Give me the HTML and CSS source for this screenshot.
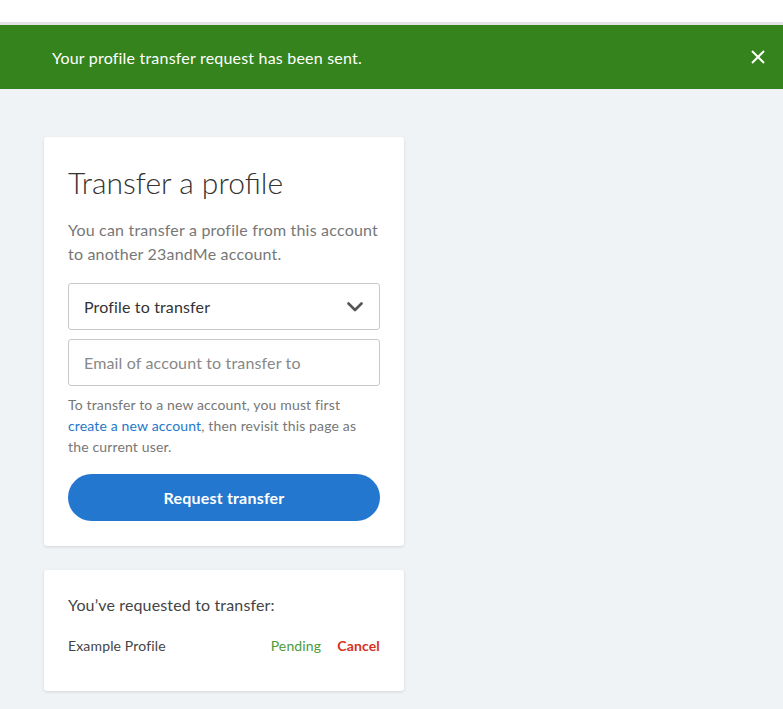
FILE: index.html
```html
<!DOCTYPE html>
<html>
<head>
<meta charset="utf-8">
<link rel="stylesheet" href="styles.css">
</head>
<body>
<div class="topbar"></div>
<div class="banner">
  <span class="banner-text">Your profile transfer request has been sent.</span>
  <button class="banner-close" aria-label="Close">
    <svg width="14" height="14" viewBox="0 0 14 14"><path d="M1 1L13 13M13 1L1 13" stroke="#fff" stroke-width="2" fill="none"/></svg>
  </button>
</div>
<main class="content">
  <section class="card form-card">
    <h1 class="title">Transfer a profile</h1>
    <p class="desc">You can transfer a profile from this account to another 23andMe account.</p>
    <div class="field select">
      <span class="select-text">Profile to transfer</span>
      <svg class="chevron" width="16" height="10" viewBox="0 0 16 10"><path d="M1.5 1.5L8 8L14.5 1.5" stroke="#555" stroke-width="2.6" fill="none" stroke-linecap="round" stroke-linejoin="round"/></svg>
    </div>
    <div class="field input">
      <span class="placeholder">Email of account to transfer to</span>
    </div>
    <p class="help">To transfer to a new account, you must first <a class="link" href="#">create a new account</a>, then revisit this page as the current user.</p>
    <button class="btn">Request transfer</button>
  </section>
  <section class="card list-card">
    <p class="list-title">You’ve requested to transfer:</p>
    <div class="row">
      <span class="row-name">Example Profile</span>
      <span class="row-actions">
        <span class="pending">Pending</span>
        <a class="cancel" href="#">Cancel</a>
      </span>
    </div>
  </section>
</main>
</body>
</html>
```
FILE: styles.css
```css
* { box-sizing: border-box; }
html, body { margin: 0; padding: 0; }
body {
  font-family: Lato, "Noto Sans", sans-serif;
  background: #eff3f6;
  min-height: 709px;
}
.topbar {
  height: 25px;
  background: #fff;
  border-bottom: 3px solid #e1e3e6;
}
.banner {
  height: 64px;
  background: #35831d;
  display: flex;
  align-items: center;
  justify-content: space-between;
  padding: 0 18px 0 52px;
}
.banner-text {
  color: #fff;
  font-size: 16px;
  letter-spacing: 0.2px;
}
.banner-close {
  background: none;
  border: 0;
  padding: 0;
  display: flex;
}
.content {
  padding: 48px 0 20px 44px;
  display: flex;
  flex-direction: column;
  gap: 24px;
}
.card {
  width: 360px;
  background: #fff;
  border-radius: 3px;
  box-shadow: 0 1px 3px rgba(0,0,0,0.12);
}
.form-card {
  padding: 28px 24px 25px;
}
.title {
  margin: 0;
  font-size: 30px;
  font-weight: 300;
  color: #333;
  line-height: 34px;
}
.desc {
  margin: 19px 0 17px;
  font-size: 16px;
  line-height: 24px;
  letter-spacing: 0.2px;
  color: #777;
}
.field {
  height: 47px;
  border: 1px solid #c8c8c8;
  border-radius: 3px;
  display: flex;
  align-items: center;
  padding: 0 15px;
  font-size: 16px;
  letter-spacing: 0.15px;
}
.select {
  justify-content: space-between;
  color: #333;
}
.chevron { margin-right: 1px; }
.input {
  margin-top: 9px;
}
.placeholder { color: #888; }
.help {
  margin: 8px 0 17px;
  font-size: 14px;
  line-height: 21px;
  letter-spacing: 0.15px;
  color: #777;
}
.link {
  color: #2477c9;
  text-decoration: none;
}
.btn {
  width: 100%;
  height: 47px;
  border: 0;
  border-radius: 24px;
  background: #2477cf;
  color: #fff;
  font-family: inherit;
  font-size: 16px;
  font-weight: 700;
  letter-spacing: 0.2px;
}
.list-card {
  padding: 25px 24px 35px;
}
.list-title {
  margin: 0 0 21px;
  font-size: 16px;
  line-height: 20px;
  letter-spacing: 0.15px;
  color: #444;
}
.row {
  display: flex;
  justify-content: space-between;
  align-items: center;
  font-size: 14px;
  line-height: 20px;
  letter-spacing: 0.15px;
}
.row-name { color: #444; }
.row-actions { display: flex; gap: 16px; }
.pending { color: #4b9b3a; }
.cancel { color: #d5311c; font-weight: 700; text-decoration: none; }
```
